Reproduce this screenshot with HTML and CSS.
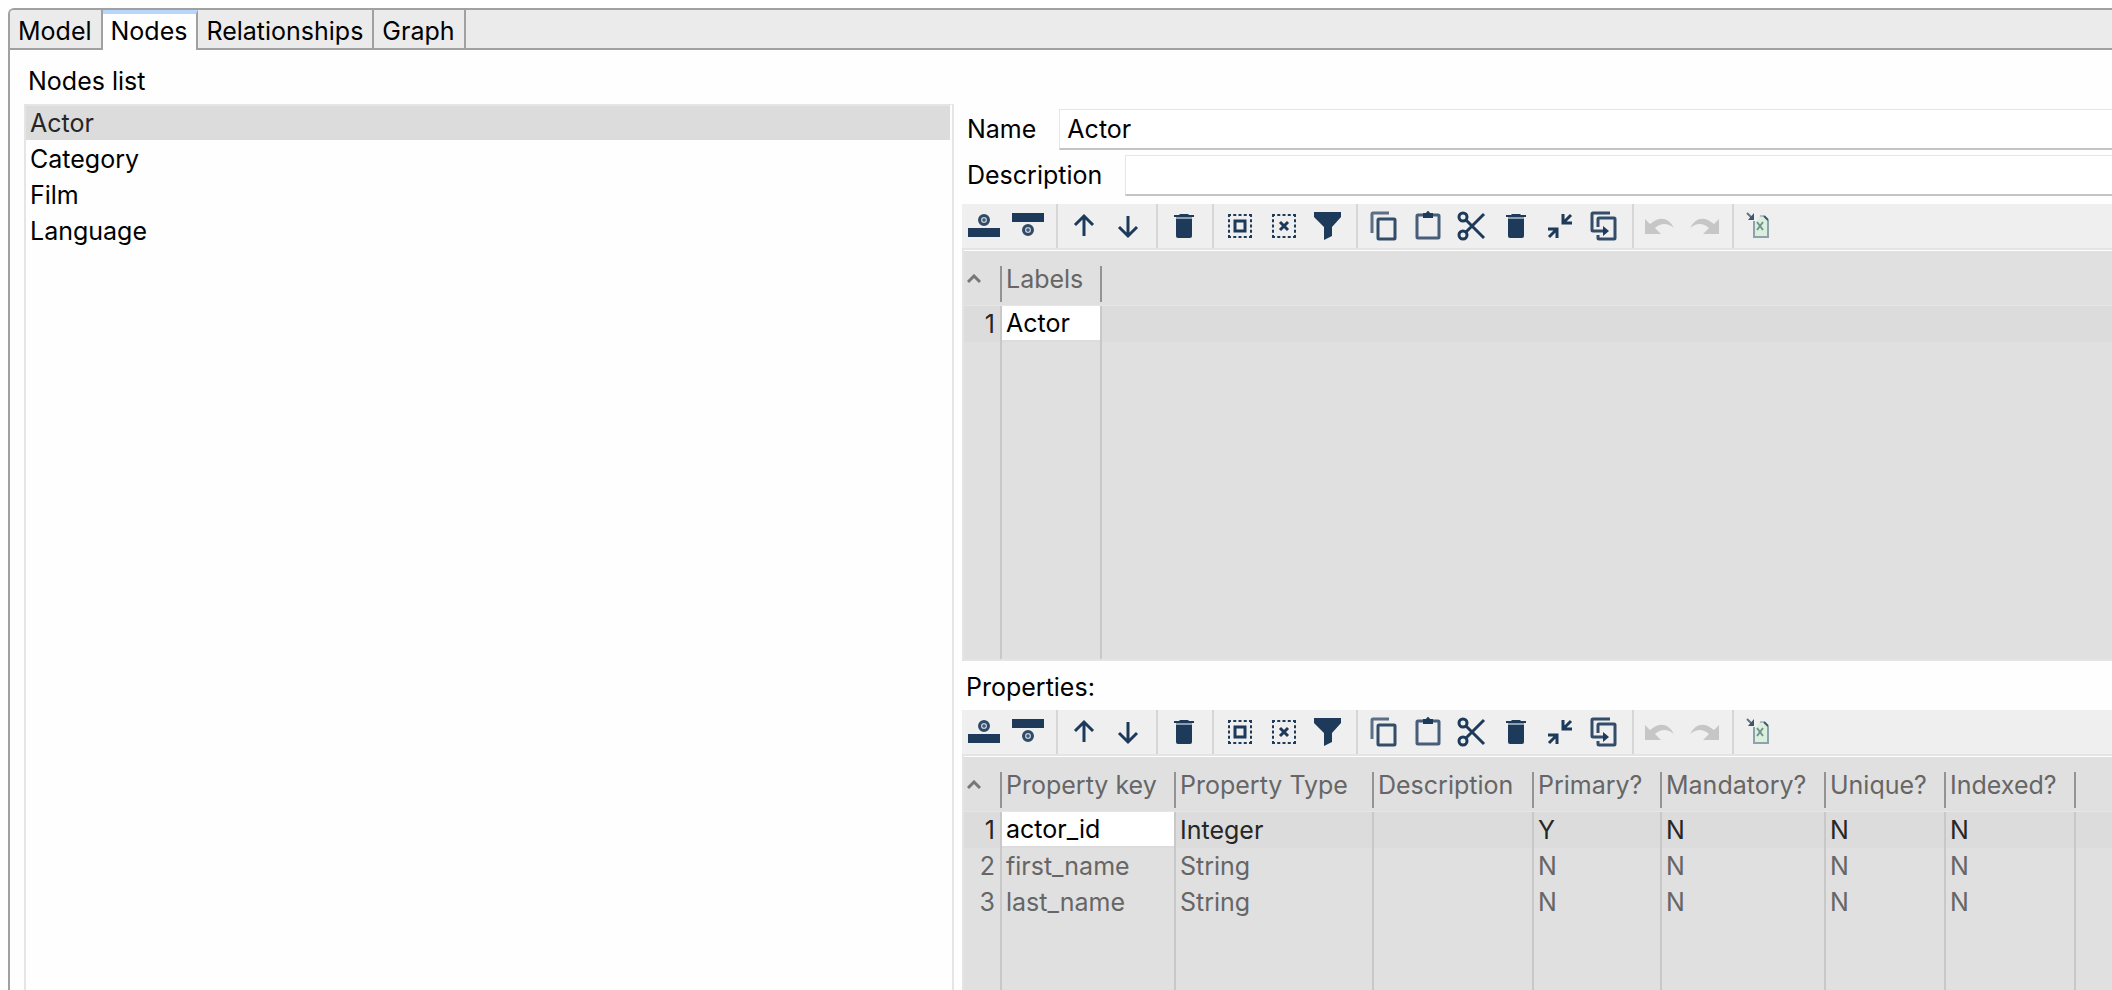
FILE: index.html
```html
<!DOCTYPE html>
<html lang="en">
<head>
    <meta charset="UTF-8">
    <meta name="viewport" content="width=device-width, initial-scale=1.0">
    <title>Graph Model - Nodes</title>
    <link rel="stylesheet" href="styles.css">
</head>
<body>
    <!-- Icon set shared by both toolbars -->
    <svg class="icon-defs" aria-hidden="true">
        <symbol id="insert-before" viewBox="0 0 36 36">
            <rect x="2" y="20" width="32" height="9" fill="currentColor"/>
            <circle cx="18" cy="12" r="4.5" fill="#c5ced6" stroke="currentColor" stroke-width="3" stroke-opacity="0.9"/>
            <path d="M18 10v4M16 12h4" stroke="currentColor" stroke-width="1"/>
        </symbol>
        <symbol id="insert-after" viewBox="0 0 36 36">
            <rect x="2" y="5" width="32" height="9" fill="currentColor"/>
            <circle cx="18" cy="22" r="4.5" fill="#c5ced6" stroke="currentColor" stroke-width="3" stroke-opacity="0.9"/>
            <path d="M18 20v4M16 22h4" stroke="currentColor" stroke-width="1"/>
        </symbol>
        <symbol id="arrow-up" viewBox="0 0 36 36">
            <path d="M18 28V8M9 17l9-9 9 9" fill="none" stroke="currentColor" stroke-width="3"/>
        </symbol>
        <symbol id="arrow-down" viewBox="0 0 36 36">
            <path d="M18 8v20M9 19l9 9 9-9" fill="none" stroke="currentColor" stroke-width="3"/>
        </symbol>
        <symbol id="trash" viewBox="0 0 36 36">
            <path d="M8 7h5l1-1h8l1 1h5v2H8z" fill="currentColor"/>
            <path d="M10 11h16v17q0 2-2 2H12q-2 0-2-2z" fill="currentColor"/>
            <path d="M10 10h16" stroke="#8fa0b0" stroke-width="2"/>
        </symbol>
        <symbol id="select-all" viewBox="0 0 36 36">
            <path d="M6 7h24M6 29h24M7 6v24M29 6v24" fill="none" stroke="currentColor" stroke-width="2" stroke-dasharray="3 2.25"/>
            <rect x="13" y="13" width="10" height="10" fill="none" stroke="currentColor" stroke-width="3"/>
        </symbol>
        <symbol id="unselect" viewBox="0 0 36 36">
            <path d="M6 7h24M6 29h24M7 6v24M29 6v24" fill="none" stroke="currentColor" stroke-width="2" stroke-dasharray="3 2.25"/>
            <path d="M14 14l8 8M22 14l-8 8" stroke="currentColor" stroke-width="3"/>
        </symbol>
        <symbol id="filter" viewBox="0 0 36 36">
            <path d="M4 4h27v5l-9 10v9l-8 4V19L4 9z" fill="currentColor"/>
        </symbol>
        <symbol id="copy" viewBox="0 0 36 36">
            <path d="M6 25V6q0-1 1-1h16" fill="none" stroke="currentColor" stroke-width="3" opacity="0.7"/>
            <rect x="12" y="11" width="17" height="20" rx="1" fill="none" stroke="currentColor" stroke-width="3" stroke-opacity="0.9"/>
        </symbol>
        <symbol id="paste" viewBox="0 0 36 36">
            <rect x="7" y="7" width="22" height="23" rx="1" fill="none" stroke="currentColor" stroke-width="3" stroke-opacity="0.8"/>
            <path d="M13 5h3q2-4 4 0h3v5H13z" fill="currentColor"/>
        </symbol>
        <symbol id="cut" viewBox="0 0 36 36">
            <g fill="none" stroke="currentColor" stroke-width="3">
                <circle cx="9" cy="9" r="4"/>
                <circle cx="9" cy="27" r="4"/>
                <path d="M12 12l18 18M12 24L30 6"/>
            </g>
        </symbol>
        <symbol id="shrink" viewBox="0 0 36 36">
            <path d="M29 7l-8 8M21 6v9h9M7 29l8-8M6 21h9v9" fill="none" stroke="currentColor" stroke-width="3"/>
        </symbol>
        <symbol id="copy-to" viewBox="0 0 36 36">
            <g fill="none" stroke="currentColor" stroke-width="3" stroke-opacity="0.9">
                <path d="M24 5H7q-1 0-1 1v16q0 1 1 1h13"/>
                <path d="M12 19V11q0-1 1-1h15q1 0 1 1v19q0 1-1 1H13q-1 0-1-1v-3"/>
            </g>
            <path d="M17 18l6 5-6 5z" fill="currentColor"/>
        </symbol>
        <symbol id="undo" viewBox="0 0 36 36">
            <path d="M3 11l5 5Q23 4 32 20Q22 12 13 20l6 6H3z" fill="currentColor"/>
        </symbol>
        <symbol id="redo" viewBox="0 0 36 36">
            <path d="M33 11l-5 5Q13 4 4 20Q14 12 23 20l-6 6h16z" fill="currentColor"/>
        </symbol>
        <symbol id="excel" viewBox="0 0 36 36">
            <path d="M12 13h3l3-6h5l3 4v18H12z" fill="#dcefdc"/>
            <path d="M12 13v16h14V12" fill="none" stroke="#8ba3ad" stroke-width="2"/>
            <path d="M18 8h4" stroke="#b0bfc6" stroke-width="2"/>
            <path d="M22 8l4 4" stroke="#3c566e" stroke-width="2"/>
            <path d="M15 14l6 8M21 14l-6 8" stroke="#6f9490" stroke-width="2"/>
            <path d="M5 5l5 5" stroke="#5d7488" stroke-width="2"/>
            <path d="M12 5v7H6z" fill="#3c566e"/>
        </symbol>
    </svg>

    <div class="folder">
        <nav class="tabs">
            <button type="button" class="tab">Model</button>
            <button type="button" class="tab active">Nodes</button>
            <button type="button" class="tab">Relationships</button>
            <button type="button" class="tab">Graph</button>
        </nav>

        <main class="page">
            <section class="nodes">
                <h1>Nodes list</h1>
                <ul class="nodes-list">
                    <li class="selected">Actor</li>
                    <li>Category</li>
                    <li>Film</li>
                    <li>Language</li>
                </ul>
            </section>

            <section class="details">
                <div class="field">
                    <label for="node-name">Name</label>
                    <input type="text" id="node-name" value="Actor">
                </div>
                <div class="field">
                    <label for="node-description">Description</label>
                    <input type="text" id="node-description">
                </div>

                <div class="toolbar">
                    <button type="button" aria-label="Insert before"><svg><use href="#insert-before"/></svg></button>
                    <button type="button" aria-label="Insert after"><svg><use href="#insert-after"/></svg></button>
                    <span class="separator"></span>
                    <button type="button" aria-label="Move up"><svg><use href="#arrow-up"/></svg></button>
                    <button type="button" aria-label="Move down"><svg><use href="#arrow-down"/></svg></button>
                    <span class="separator"></span>
                    <button type="button" aria-label="Clear all"><svg><use href="#trash"/></svg></button>
                    <span class="separator"></span>
                    <button type="button" aria-label="Select all"><svg><use href="#select-all"/></svg></button>
                    <button type="button" aria-label="Clear selection"><svg><use href="#unselect"/></svg></button>
                    <button type="button" aria-label="Filter"><svg><use href="#filter"/></svg></button>
                    <span class="separator"></span>
                    <button type="button" aria-label="Copy"><svg><use href="#copy"/></svg></button>
                    <button type="button" aria-label="Paste"><svg><use href="#paste"/></svg></button>
                    <button type="button" aria-label="Cut"><svg><use href="#cut"/></svg></button>
                    <button type="button" aria-label="Delete"><svg><use href="#trash"/></svg></button>
                    <button type="button" aria-label="Keep selected"><svg><use href="#shrink"/></svg></button>
                    <button type="button" aria-label="Copy to all rows"><svg><use href="#copy-to"/></svg></button>
                    <span class="separator"></span>
                    <button type="button" aria-label="Undo" disabled><svg><use href="#undo"/></svg></button>
                    <button type="button" aria-label="Redo" disabled><svg><use href="#redo"/></svg></button>
                    <span class="separator"></span>
                    <button type="button" aria-label="Export to Excel"><svg><use href="#excel"/></svg></button>
                </div>
                <div class="grid labels-grid">
                    <table>
                        <colgroup>
                            <col class="col-index"><col class="col-label"><col>
                        </colgroup>
                        <thead>
                            <tr>
                                <th><span><svg class="sort" viewBox="0 0 14 10"><path d="M1 8l6-6 6 6"/></svg></span></th>
                                <th><span>Labels</span></th>
                                <th></th>
                            </tr>
                        </thead>
                        <tbody>
                            <tr class="selected">
                                <td>1</td>
                                <td class="editing"><input type="text" value="Actor" aria-label="Label"></td>
                                <td></td>
                            </tr>
                            <tr class="filler"><td></td><td></td><td></td></tr>
                        </tbody>
                    </table>
                </div>

                <h2>Properties:</h2>
                <div class="toolbar">
                    <button type="button" aria-label="Insert before"><svg><use href="#insert-before"/></svg></button>
                    <button type="button" aria-label="Insert after"><svg><use href="#insert-after"/></svg></button>
                    <span class="separator"></span>
                    <button type="button" aria-label="Move up"><svg><use href="#arrow-up"/></svg></button>
                    <button type="button" aria-label="Move down"><svg><use href="#arrow-down"/></svg></button>
                    <span class="separator"></span>
                    <button type="button" aria-label="Clear all"><svg><use href="#trash"/></svg></button>
                    <span class="separator"></span>
                    <button type="button" aria-label="Select all"><svg><use href="#select-all"/></svg></button>
                    <button type="button" aria-label="Clear selection"><svg><use href="#unselect"/></svg></button>
                    <button type="button" aria-label="Filter"><svg><use href="#filter"/></svg></button>
                    <span class="separator"></span>
                    <button type="button" aria-label="Copy"><svg><use href="#copy"/></svg></button>
                    <button type="button" aria-label="Paste"><svg><use href="#paste"/></svg></button>
                    <button type="button" aria-label="Cut"><svg><use href="#cut"/></svg></button>
                    <button type="button" aria-label="Delete"><svg><use href="#trash"/></svg></button>
                    <button type="button" aria-label="Keep selected"><svg><use href="#shrink"/></svg></button>
                    <button type="button" aria-label="Copy to all rows"><svg><use href="#copy-to"/></svg></button>
                    <span class="separator"></span>
                    <button type="button" aria-label="Undo" disabled><svg><use href="#undo"/></svg></button>
                    <button type="button" aria-label="Redo" disabled><svg><use href="#redo"/></svg></button>
                    <span class="separator"></span>
                    <button type="button" aria-label="Export to Excel"><svg><use href="#excel"/></svg></button>
                </div>
                <div class="grid properties-grid">
                    <table>
                        <colgroup>
                            <col class="col-index"><col class="col-key"><col class="col-type"><col class="col-description">
                            <col class="col-primary"><col class="col-mandatory"><col class="col-unique"><col class="col-indexed"><col>
                        </colgroup>
                        <thead>
                            <tr>
                                <th><span><svg class="sort" viewBox="0 0 14 10"><path d="M1 8l6-6 6 6"/></svg></span></th>
                                <th><span>Property key</span></th>
                                <th><span>Property Type</span></th>
                                <th><span>Description</span></th>
                                <th><span>Primary?</span></th>
                                <th><span>Mandatory?</span></th>
                                <th><span>Unique?</span></th>
                                <th><span>Indexed?</span></th>
                                <th></th>
                            </tr>
                        </thead>
                        <tbody>
                            <tr class="selected">
                                <td>1</td>
                                <td class="editing"><input type="text" value="actor_id" aria-label="Property key"></td>
                                <td>Integer</td><td></td><td>Y</td><td>N</td><td>N</td><td>N</td><td></td>
                            </tr>
                            <tr>
                                <td>2</td><td>first_name</td><td>String</td><td></td><td>N</td><td>N</td><td>N</td><td>N</td><td></td>
                            </tr>
                            <tr>
                                <td>3</td><td>last_name</td><td>String</td><td></td><td>N</td><td>N</td><td>N</td><td>N</td><td></td>
                            </tr>
                            <tr class="filler">
                                <td></td><td></td><td></td><td></td><td></td><td></td><td></td><td></td><td></td>
                            </tr>
                        </tbody>
                    </table>
                </div>
            </section>
        </main>
    </div>
</body>
</html>
```

FILE: styles.css
```css
* {
    box-sizing: border-box;
}

body {
    margin: 0;
    padding: 8px 0 0 8px;
    height: 100vh;
    overflow: hidden;
    background-color: #fefefe;
    color: #000;
    font-family: Inter, "Liberation Sans", sans-serif;
    font-size: 25px;
    line-height: 30px;
}

button, input {
    font: inherit;
    color: inherit;
}

.icon-defs {
    display: none;
}

.folder {
    display: flex;
    flex-direction: column;
    height: 100%;
    border: 2px solid #a0a0a0;
    border-width: 2px 0 0 2px;
    border-top-left-radius: 6px;
}

/* Tabs */
.tabs {
    display: flex;
    height: 40px;
    background: linear-gradient(#a0a0a0, #a0a0a0) bottom / 100% 2px no-repeat #ebebeb;
    border-top-left-radius: 4px;
}

.tab {
    padding: 6px 9px 4px 8px;
    background: none;
    border: 0;
    border-right: 2px solid #a0a0a0;
}

.tab.active {
    padding: 2px 9px 4px 8px;
    background-color: #fefefe;
    border-top: 4px solid #b8d5fa;
    box-shadow: -2px 0 #a0a0a0;
}

/* Page */
.page {
    flex: 1;
    display: grid;
    grid-template-columns: 93fr 115fr;
    gap: 8px;
    min-height: 0;
    padding-left: 14px;
}

.nodes, .details {
    display: flex;
    flex-direction: column;
    min-width: 0;
    min-height: 0;
}

h1, h2 {
    margin: 0;
    font-size: 25px;
    font-weight: normal;
}

h1 {
    padding: 16px 4px 8px;
}

h2 {
    padding: 11px 4px 5px;
}

.nodes-list {
    flex: 1;
    margin: 0;
    padding: 0;
    list-style: none;
    border: 2px solid #e5e5e5;
    border-width: 0 2px;
}

.nodes-list li {
    height: 36px;
    padding: 2px 4px;
    border-top: 2px solid transparent;
}

.nodes-list .selected {
    background: #dcdcdc padding-box;
    border-top-color: #e5e5e5;
    border-right: 2px solid #fefefe;
    color: #262626;
}

.details {
    padding-top: 59px;
}

.field {
    display: flex;
    align-items: center;
    gap: 23px;
    margin-bottom: 5px;
    padding-left: 5px;
}

.field label {
    padding-bottom: 2px;
}

.field input {
    flex: 1;
    min-width: 0;
    height: 41px;
    padding: 0 7px;
    background-color: #fff;
    border: 1px solid #e6e6e6;
    border-right: 0;
    border-bottom: 2px solid #c4c4c4;
    outline: none;
}

/* Toolbar */
.toolbar {
    display: flex;
    flex-shrink: 0;
    height: 44px;
    margin-top: 3px;
    background-color: #efefef;
    color: #1d3a5a;
}

.toolbar button {
    width: 44px;
    height: 44px;
    padding: 4px;
    background: none;
    border: 0;
}

.toolbar button:disabled {
    color: #c6c6c6;
}

.toolbar svg {
    display: block;
    width: 36px;
    height: 36px;
}

.separator {
    width: 2px;
    margin: 0 4px 0 6px;
    background-color: #d6d6d6;
}

/* Tables */
.grid {
    min-height: 0;
    overflow: hidden;
    background-color: #e0e0e0;
    border: 2px solid #e4e4e4;
    border-right: 0;
}

.labels-grid {
    flex: 7 1 0;
}

.properties-grid {
    flex: 4 1 0;
    border-bottom: 0;
}

table {
    width: 100%;
    height: 100%;
    table-layout: fixed;
    border-collapse: separate;
    border-spacing: 0;
    border-top: 1px solid #fefefe;
}

.col-index { width: 38px; }
.col-label { width: 100px; }
.col-key { width: 174px; }
.col-type { width: 198px; }
.col-description { width: 160px; }
.col-primary { width: 128px; }
.col-mandatory { width: 164px; }
.col-unique { width: 120px; }
.col-indexed { width: 130px; }

th {
    height: 55px;
    padding: 15px 0 3px;
    border-bottom: 1px solid #e5e5e5;
    color: #666;
    font-weight: normal;
    text-align: left;
    vertical-align: top;
    white-space: nowrap;
}

th span {
    display: block;
    height: 36px;
    padding-left: 4px;
    border-right: 2px solid #939393;
    line-height: 26px;
}

.sort {
    width: 14px;
    height: 10px;
    margin-left: -1px;
    vertical-align: 4px;
    fill: none;
    stroke: #777;
    stroke-width: 3;
}

td {
    height: 36px;
    padding: 0 5px 0 4px;
    border-right: 2px solid #c8c8c8;
    color: #666;
}

td:first-child {
    text-align: right;
}

td:last-child {
    border-right: 0;
}

tr.selected td {
    background-color: #dcdcdc;
    color: #262626;
}

tr.filler td {
    height: auto;
}

td.editing {
    padding: 0;
    vertical-align: top;
}

.editing input {
    display: block;
    width: 100%;
    height: 34px;
    padding: 0 4px;
    background-color: #fff;
    border: 0;
    outline: none;
    color: #000;
}
```
